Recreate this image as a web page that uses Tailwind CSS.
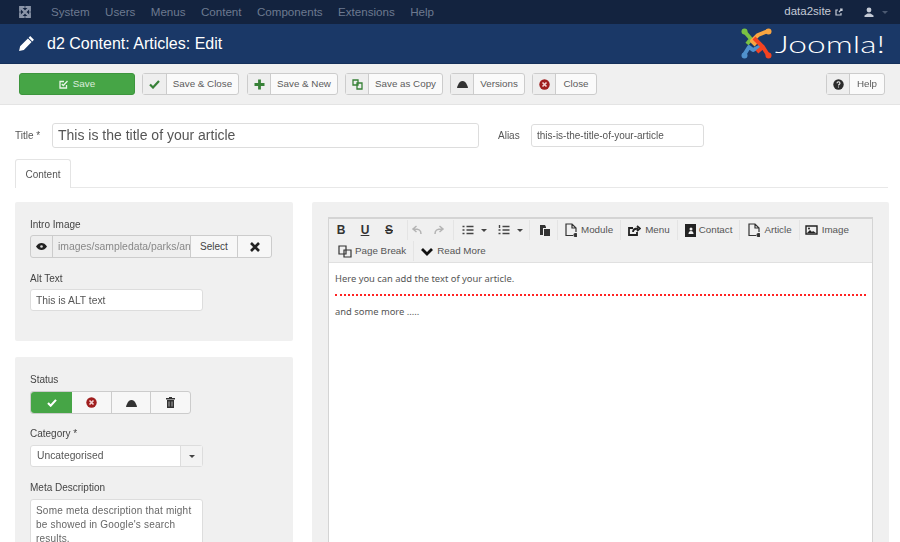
<!DOCTYPE html>
<html lang="en">
<head>
    <meta charset="UTF-8">
    <script src="https://cdn.jsdelivr.net/npm/@tailwindcss/browser@4"></script>
    <title>d2 Content: Articles: Edit</title>
</head>
<body class="bg-white font-['Liberation_Sans',sans-serif] text-[#555] overflow-hidden">
<div class="w-[900px] h-[542px] overflow-hidden flex flex-col blur-[0.5px]">

    <!-- Top nav -->
    <nav class="h-6 shrink-0 bg-[#13233f] flex items-center pl-[18px] pr-[12px] text-[11.6px] text-[#6d7a90]">
        <svg class="w-3.5 h-3.5 mr-[19px]" viewBox="0 0 14 14" fill="none" stroke="#8b95a8" stroke-width="2.4" stroke-linecap="round"><path d="M3 3l8 8M11 3l-8 8"/><path d="M2 6V2h4M12 6V2H8M2 8v4h4M12 8v4H8" stroke-width="1.8"/></svg>
        <div class="flex gap-[15.4px]">
            <span>System</span><span>Users</span><span>Menus</span><span>Content</span><span>Components</span><span>Extensions</span><span>Help</span>
        </div>
        <span class="ml-auto text-[#c5cbd6] text-[11.5px]">data2site</span>
        <svg class="w-2 h-2 ml-[4px]" viewBox="0 0 8 8" fill="none" stroke="#c5cbd6" stroke-width="1.2"><path d="M6 5v2H1V2h2M4 4l3-3M5 1h2v2"/></svg>
        <svg class="w-2.5 h-2.5 ml-[21px]" viewBox="0 0 10 10" fill="#c5cbd6"><circle cx="5" cy="3" r="2.4"/><path d="M0.500 10V8.500L3.500 6.500h3l3 2V10z"/></svg>
        <span class="ml-[8px] w-0 h-0 border-x-[3px] border-x-transparent border-t-[3px] border-t-[#4c5a72]"></span>
    </nav>

    <!-- Title bar -->
    <header class="h-10 shrink-0 bg-[#1a3867] border-b border-[#14305a] flex items-center pl-[18px] pr-[15px]">
        <svg class="w-[17px] h-[17px] mr-[12px]" viewBox="0 0 16 16" fill="#fff"><path d="M11.500 1l3.500 3.500-1.500 1.500-3.500-3.500zM9.300 3.200l3.500 3.500-7.300 7.300-4.500 1 1-4.500z"/></svg>
        <h1 class="text-[16px] leading-none text-white">d2 Content: Articles: Edit</h1>
        <div class="ml-auto flex items-center">
            <svg class="w-[31px] h-[31px]" viewBox="0 0 31 31" fill="none" stroke-width="4" stroke-linejoin="round">
                <path d="M3 3L10 11L6 16" stroke="#7ac143"/>
                <path d="M27 3L17 7L11 13L15 17" stroke="#f9a541"/>
                <path d="M3 27L8 19L12 22L20 18" stroke="#5091cd"/>
                <path d="M13 10L22 19L27 27M22 19L16 24" stroke="#f44321"/>
                <circle cx="3.500" cy="3.500" r="3" fill="#7ac143"/>
                <circle cx="27.500" cy="3.500" r="3" fill="#f9a541"/>
                <circle cx="27.500" cy="27.500" r="3" fill="#f44321"/>
                <circle cx="3.500" cy="27.500" r="3" fill="#5091cd"/>
            </svg>
            <span class="ml-[3px] w-[110px] text-[24px] leading-none font-['Lato',sans-serif] font-light text-white origin-left scale-x-[1.4] whitespace-nowrap">Joomla!</span>
        </div>
    </header>

    <!-- Toolbar -->
    <div class="h-[41px] shrink-0 bg-[#f0f0f0] border-b border-[#e4e4e4] flex items-center pl-[19px] pr-[15px] text-[9.800px] text-[#5c5c5c]">
        <button class="w-[116px] h-[22px] bg-[#46a546] border border-[#3d953d] rounded-[3px] text-white/80 flex items-center justify-center gap-[5px]">
            <svg class="w-[9px] h-[9px]" viewBox="0 0 9 9" fill="none" stroke="#e8f5e8" stroke-width="1.300"><path d="M7.500 5v3H1V1.500h4"/><path d="M2.800 4l1.500 1.500L8.500 1"/></svg>
            Save
        </button>
        <button class="ml-[7px] h-[22px] w-[97px] flex border border-[#ccc] rounded-[3px] bg-[#fafafa]">
            <span class="w-[24px] h-full bg-[#eee] border-r border-[#ccc] flex items-center justify-center">
                <svg class="w-[11px] h-[9px]" viewBox="0 0 11 9" fill="none" stroke="#378137" stroke-width="2.200"><path d="M1 4.500l3 3 6-6.500"/></svg>
            </span>
            <span class="flex-1 self-center">Save &amp; Close</span>
        </button>
        <button class="ml-[8px] h-[22px] w-[91px] flex border border-[#ccc] rounded-[3px] bg-[#fafafa]">
            <span class="w-[23px] h-full bg-[#eee] border-r border-[#ccc] flex items-center justify-center">
                <svg class="w-[11px] h-[11px]" viewBox="0 0 11 11" fill="none" stroke="#378137" stroke-width="2.800"><path d="M5.500 0.500v10M0.500 5.500h10"/></svg>
            </span>
            <span class="flex-1 self-center">Save &amp; New</span>
        </button>
        <button class="ml-[7px] h-[22px] w-[98px] flex border border-[#ccc] rounded-[3px] bg-[#fafafa]">
            <span class="w-[23px] h-full bg-[#eee] border-r border-[#ccc] flex items-center justify-center">
                <svg class="w-[11px] h-[11px]" viewBox="0 0 11 11" fill="none" stroke="#378137" stroke-width="1.300"><path d="M1 1h5v5H1z"/><path d="M5 4h5v6H5z"/></svg>
            </span>
            <span class="flex-1 self-center">Save as Copy</span>
        </button>
        <button class="ml-[7px] h-[22px] w-[75px] flex border border-[#ccc] rounded-[3px] bg-[#fafafa]">
            <span class="w-[23px] h-full bg-[#eee] border-r border-[#ccc] flex items-center justify-center">
                <svg class="w-[11px] h-[8px]" viewBox="0 0 11 8" fill="#333"><path d="M0 8c0-1 .5-2 1-3 1-2.500 2.500-4 4.500-4S9 2.500 10 5c.5 1 1 2 1 3z"/></svg>
            </span>
            <span class="flex-1 self-center">Versions</span>
        </button>
        <button class="ml-[7px] h-[22px] w-[65px] flex border border-[#ccc] rounded-[3px] bg-[#fafafa]">
            <span class="w-[23px] h-full bg-[#eee] border-r border-[#ccc] flex items-center justify-center">
                <svg class="w-[11px] h-[11px]" viewBox="0 0 11 11"><circle cx="5.500" cy="5.500" r="5.200" fill="#a01f1f"/><path d="M3.500 3.500l4 4M7.500 3.500l-4 4" stroke="#f3d4d4" stroke-width="1.600"/></svg>
            </span>
            <span class="flex-1 self-center">Close</span>
        </button>
        <button class="ml-auto h-[22px] w-[59px] flex border border-[#ccc] rounded-[3px] bg-[#fafafa]">
            <span class="w-[23px] h-full bg-[#eee] border-r border-[#ccc] flex items-center justify-center">
                <svg class="w-[11px] h-[11px]" viewBox="0 0 11 11"><circle cx="5.500" cy="5.500" r="5.200" fill="#2b2b2b"/><path d="M4 4.200c0-2 3-2 3 0 0 1-1.500 1-1.500 2.200M5.500 7.600v1" stroke="#eee" stroke-width="1.100" fill="none"/></svg>
            </span>
            <span class="flex-1 self-center">Help</span>
        </button>
    </div>

    <!-- Form -->
    <main class="flex-1 min-h-0 pl-[15px] pr-[12px]">
        <div class="mt-[18px] flex items-center">
            <label class="w-[37px] text-[10px]">Title *</label>
            <input class="w-[427px] h-[25px] border border-[#ddd] rounded-[3px] px-[5px] pb-px text-[14px] text-[#555] font-['Liberation_Sans',sans-serif]" value="This is the title of your article">
            <label class="ml-[19px] w-[33px] text-[10px]">Alias</label>
            <input class="w-[173px] h-[23px] border border-[#ddd] rounded-[3px] px-[5px] text-[10px] text-[#555]" value="this-is-the-title-of-your-article">
        </div>

        <div class="mt-[11px] border-b border-[#e8e8e8] h-[29px]">
            <div class="w-[56px] h-[29px] bg-white border border-b-0 border-[#e4e4e4] rounded-t-[3px] flex items-center justify-center text-[10px]">Content</div>
        </div>

        <div class="mt-[14px] flex gap-[19px]">
            <div class="w-[278px] shrink-0 flex flex-col gap-[16px]">
                <!-- Intro image -->
                <section class="h-[139px] bg-[#f0f0f0] rounded-[2px] pl-[15px] pt-[17px]">
                    <div class="text-[10px] leading-[12px] text-[#444]">Intro Image</div>
                    <div class="mt-[4px] w-[242px] h-[23px] flex border border-[#ccc] rounded-[3px] bg-[#eee]">
                        <span class="w-[22px] border-r border-[#ccc] flex items-center justify-center">
                            <svg class="w-[11px] h-[7px]" viewBox="0 0 11 7" fill="#222"><path d="M0 3.500C1.500 1 3.500 0 5.500 0S9.500 1 11 3.500C9.500 6 7.500 7 5.500 7S1.500 6 0 3.500z"/><circle cx="5.500" cy="3.500" r="1.300" fill="#ddd"/></svg>
                        </span>
                        <input class="w-[137px] pl-[5px] bg-transparent text-[10.400px] text-[#888]" value="images/sampledata/parks/animals" readonly>
                        <span class="w-[48px] bg-[#f7f7f7] border-x border-[#ccc] flex items-center justify-center text-[10px] text-[#444]">Select</span>
                        <span class="flex-1 bg-[#f7f7f7] flex items-center justify-center rounded-r-[3px]">
                            <svg class="w-[10px] h-[10px]" viewBox="0 0 10 10" stroke="#222" stroke-width="2.600"><path d="M1 1l8 8M9 1l-8 8"/></svg>
                        </span>
                    </div>
                    <div class="mt-[15px] text-[10px] leading-[12px] text-[#444]">Alt Text</div>
                    <input class="mt-[4px] w-[173px] h-[22px] bg-white border border-[#ddd] rounded-[3px] px-[5px] text-[10.300px] text-[#555] block" value="This is ALT text">
                </section>

                <!-- Publishing -->
                <section class="h-[190px] bg-[#f0f0f0] rounded-[2px] pl-[15px] pt-[17px]">
                    <div class="text-[10px] leading-[12px] text-[#444]">Status</div>
                    <div class="mt-[5px] w-[161px] h-[23px] flex border border-[#ccc] rounded-[3px] bg-[#f7f7f7]">
                        <span class="w-[41px] bg-[#46a546] rounded-l-[3px] flex items-center justify-center">
                            <svg class="w-[10px] h-[8px]" viewBox="0 0 11 9" fill="none" stroke="#fff" stroke-width="2.400"><path d="M1 4.500l3 3 6-6.500"/></svg>
                        </span>
                        <span class="w-[40px] border-r border-[#ccc] flex items-center justify-center">
                            <svg class="w-[11px] h-[11px]" viewBox="0 0 11 11"><circle cx="5.500" cy="5.500" r="5.200" fill="#a01f1f"/><path d="M3.500 3.500l4 4M7.500 3.500l-4 4" stroke="#f3d4d4" stroke-width="1.600"/></svg>
                        </span>
                        <span class="w-[39px] border-r border-[#ccc] flex items-center justify-center">
                            <svg class="w-[11px] h-[8px]" viewBox="0 0 11 8" fill="#333"><path d="M0 8c0-1 .5-2 1-3 1-2.500 2.500-4 4.500-4S9 2.500 10 5c.5 1 1 2 1 3z"/></svg>
                        </span>
                        <span class="flex-1 flex items-center justify-center">
                            <svg class="w-[9px] h-[11px]" viewBox="0 0 9 11" fill="#333"><path d="M3 0h3v1h3v1.500H0V1h3zM1 3h7v8H1z"/><path d="M3 4.500v5M6 4.500v5" stroke="#ddd" stroke-width=".7"/></svg>
                        </span>
                    </div>
                    <div class="mt-[14px] text-[10px] leading-[12px] text-[#444]">Category *</div>
                    <div class="mt-[5px] w-[173px] h-[22px] flex bg-white border border-[#ddd] rounded-[3px] text-[10.300px]">
                        <span class="flex-1 self-center pl-[6px] text-[#555]">Uncategorised</span>
                        <span class="w-[22px] bg-[#f3f3f3] border-l border-[#ddd] flex items-center justify-center">
                            <span class="w-0 h-0 border-x-[3px] border-x-transparent border-t-[3px] border-t-[#444]"></span>
                        </span>
                    </div>
                    <div class="mt-[15px] text-[10px] leading-[12px] text-[#444]">Meta Description</div>
                    <textarea class="mt-[5px] w-[173px] h-[70px] block resize-none overflow-hidden bg-white border border-[#ddd] rounded-[3px] px-[5px] py-[4px] text-[10px] leading-[14px] text-[#666] tracking-[0.2px]">Some meta description that might be showed in Google's search results.</textarea>
                </section>
            </div>

            <!-- Editor panel -->
            <section class="flex-1 h-[345px] bg-[#f0f0f0] rounded-[2px] px-[16px] pt-[15px]">
                <div class="h-[340px] border border-[#d4d4d4] border-t-[2px] bg-white">
                    <div class="h-[44px] bg-[#f0f0f0] border-b border-[#e0e0e0] pl-[4px] pt-px text-[9.800px] text-[#555]">
                        <div class="h-[20px] flex items-center">
                            <span class="w-[16px] text-center font-bold text-[12px] text-[#333]">B</span>
                            <span class="ml-[4px] w-[24px] text-center font-bold text-[12px] underline text-[#333]">U</span>
                            <span class="w-[24px] text-center font-bold text-[12px] line-through text-[#333]">S</span>
                            <span class="h-full border-l border-[#e4e4e4] ml-[6px] mr-[3px]"></span>
                            <svg class="w-[12px] h-[10px]" viewBox="0 0 12 10" fill="none" stroke="#b4b4b4" stroke-width="1.500"><path d="M10 9c0-4-2-5-7-5M5.500 1L2 4l3.500 3"/></svg>
                            <svg class="w-[12px] h-[10px] ml-[10px]" viewBox="0 0 12 10" fill="none" stroke="#b4b4b4" stroke-width="1.500"><path d="M2 9c0-4 2-5 7-5M6.500 1L10 4 6.500 7"/></svg>
                            <span class="h-full border-l border-[#e4e4e4] ml-[8px] mr-[8px]"></span>
                            <svg class="w-[12px] h-[10px]" viewBox="0 0 11 10" stroke="#444" stroke-width="1.400"><path d="M0 1.500h2M4 1.500h7M0 5h2M4 5h7M0 8.500h2M4 8.500h7"/></svg>
                            <span class="ml-[7px] w-0 h-0 border-x-[3px] border-x-transparent border-t-[3px] border-t-[#444]"></span>
                            <svg class="w-[12px] h-[10px] ml-[11px]" viewBox="0 0 11 10" stroke="#444" stroke-width="1.400"><path d="M1 0v3M0 5h2M0 8.500h2M4 1.500h7M4 5h7M4 8.500h7"/></svg>
                            <span class="ml-[7px] w-0 h-0 border-x-[3px] border-x-transparent border-t-[3px] border-t-[#444]"></span>
                            <span class="h-full border-l border-[#e4e4e4] ml-[6px] mr-[9px]"></span>
                            <svg class="w-[11px] h-[12px]" viewBox="0 0 11 12" fill="#333"><path d="M1 1h5l1 2v1H4v7H1zM5 5h6v7H5z"/></svg>
                            <span class="h-full border-l border-[#e4e4e4] ml-[7px] mr-[7px]"></span>
                            <svg class="w-[12px] h-[14px]" viewBox="0 0 12 14" fill="none" stroke="#333" stroke-width="1.200"><path d="M8 12.500H1V1h6l4 4v4M7 1v4h4"/><circle cx="10.500" cy="12" r="1.500" fill="#333"/></svg>
                            <span class="ml-[4px]">Module</span>
                            <span class="h-full border-l border-[#e4e4e4] ml-[7px] mr-[7px]"></span>
                            <svg class="w-[13px] h-[11px]" viewBox="0 0 13 11" fill="none" stroke="#222" stroke-width="1.800"><path d="M5 3H1v7h8V7M5 7c0-2 2-3.500 5-3.500M9 1l3 2.500L9 6"/></svg>
                            <span class="ml-[4px]">Menu</span>
                            <span class="h-full border-l border-[#e4e4e4] ml-[7px] mr-[7px]"></span>
                            <svg class="w-[11px] h-[13px]" viewBox="0 0 11 13" fill="#222"><path d="M0 0h11v13H0z"/><circle cx="6" cy="5" r="1.500" fill="#f0f0f0"/><path d="M3.500 10c0-2 1-3 2.500-3s2.500 1 2.500 3z" fill="#f0f0f0"/></svg>
                            <span class="ml-[3px]">Contact</span>
                            <span class="h-full border-l border-[#e4e4e4] ml-[7px] mr-[8px]"></span>
                            <svg class="w-[12px] h-[14px]" viewBox="0 0 12 14" fill="none" stroke="#333" stroke-width="1.200"><path d="M8 12.500H1V1h6l4 4v4M7 1v4h4"/><circle cx="10.500" cy="12" r="1.500" fill="#333"/></svg>
                            <span class="ml-[4px]">Article</span>
                            <span class="h-full border-l border-[#e4e4e4] ml-[7px] mr-[5px]"></span>
                            <svg class="w-[13px] h-[10px]" viewBox="0 0 13 10" fill="none" stroke="#222" stroke-width="1.400"><path d="M1 1h11v8H1z"/><path d="M2 8l3-3 2 2 1-1 3 2z" fill="#222" stroke="none"/><circle cx="4" cy="3.500" r="1" fill="#222" stroke="none"/></svg>
                            <span class="ml-[4px]">Image</span>
                        </div>
                        <div class="mt-px h-[20px] flex items-center pl-[5px]">
                            <svg class="w-[14px] h-[13px]" viewBox="0 0 14 13" fill="none" stroke="#333" stroke-width="1.200"><path d="M1 1h7v8H1zM6 5h7v7H6z"/></svg>
                            <span class="ml-[3px]">Page Break</span>
                            <span class="h-full border-l border-[#e4e4e4] ml-[7px] mr-[7px]"></span>
                            <svg class="w-[12px] h-[9px]" viewBox="0 0 12 9" fill="none" stroke="#111" stroke-width="2.800"><path d="M1 2l5 5 5-5"/></svg>
                            <span class="ml-[4px]">Read More</span>
                        </div>
                    </div>
                    <div class="px-[6px] pt-[9px] text-[9.400px] leading-[14px] font-['Noto_Sans'] text-[#555]">
                        <p>Here you can add the text of your article.</p>
                        <hr class="mt-[8px] border-t-2 border-dotted border-[#f22] w-[531px]">
                        <p class="mt-[9px]">and some more .....</p>
                    </div>
                </div>
            </section>
        </div>
    </main>
</div>
</body>
</html>
